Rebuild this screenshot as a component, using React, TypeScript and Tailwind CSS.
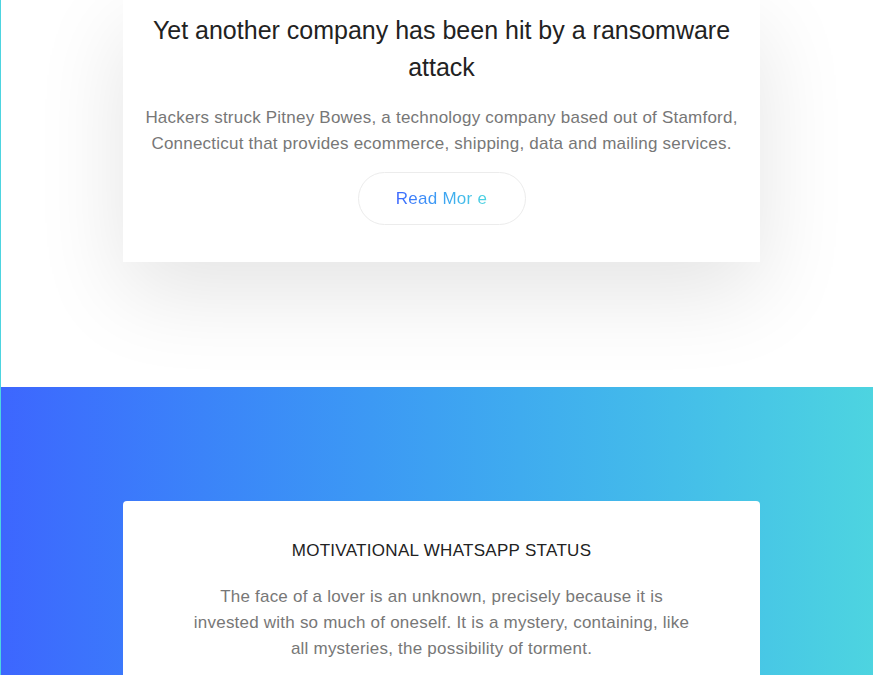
import React from "react";

const font = { fontFamily: '"Liberation Sans", Arial, sans-serif' };

function NewsCard() {
  return (
    <div className="ml-[122px] w-[637px] bg-white px-[20px] pt-3 pb-[37px] text-center shadow-[0_30px_90px_rgba(0,0,0,0.11)]">
      <h2 className="text-[25px] leading-[37px] text-[#222]">
        Yet another company has been hit by a ransomware attack
      </h2>
      <p className="mt-[19px] text-[17px] leading-[26px] tracking-[0.22px] text-[#777]">
        Hackers struck Pitney Bowes, a technology company based out of Stamford,
        Connecticut that provides ecommerce, shipping, data and mailing services.
      </p>
      <button className="mx-auto mt-[15px] flex h-[53px] w-[168px] items-center justify-center rounded-full border border-[#ececec] bg-white">
        <span className="bg-gradient-to-r from-[#3d66fe] to-[#4dd4e0] bg-clip-text text-[17px] tracking-[0.25px] text-transparent">
          Read Mor e
        </span>
      </button>
    </div>
  );
}

function StatusCard() {
  return (
    <div className="ml-[122px] w-[637px] rounded-[4px] bg-white px-[22px] pt-10 pb-10 text-center">
      <h3 className="text-[17px] leading-[20px] tracking-[0.3px] text-[#222] uppercase">
        Motivational WhatsApp Status
      </h3>
      <p className="mx-auto mt-[23px] w-[504px] text-[17px] leading-[26px] tracking-[0.22px] text-[#777]">
        The face of a lover is an unknown, precisely because it is invested with so much
        of oneself. It is a mystery, containing, like all mysteries, the possibility of
        torment.
      </p>
    </div>
  );
}

export default function App() {
  return (
    <div style={font} className="min-h-screen overflow-hidden border-l border-[#4dd4e0] bg-white">
      <section className="pb-[125px]">
        <NewsCard />
      </section>
      <section className="bg-gradient-to-r from-[#3d66fe] to-[#4dd4e0] pt-[114px] pb-20">
        <StatusCard />
      </section>
    </div>
  );
}
